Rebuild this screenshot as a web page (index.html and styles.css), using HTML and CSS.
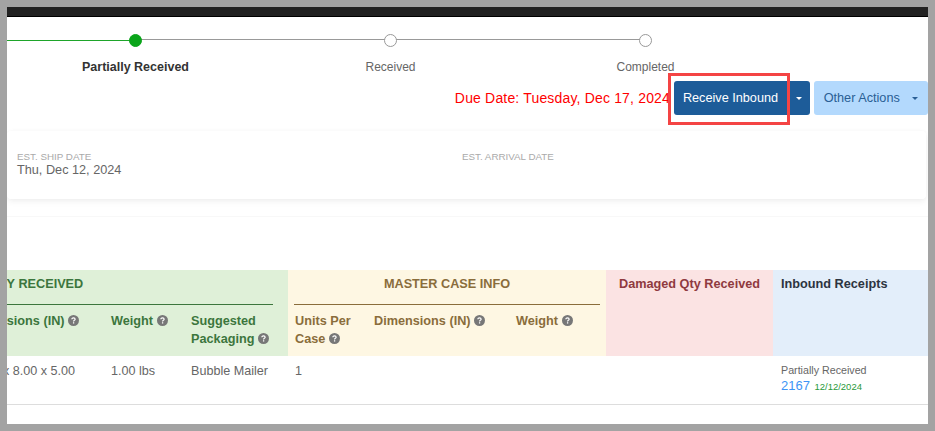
FILE: index.html
```html
<!DOCTYPE html>
<html>
<head>
  <title>Inbound</title>
  <link rel="stylesheet" href="styles.css">
</head>
<body>
  <svg class="icon-defs" width="0" height="0">
    <symbol id="help" viewBox="0 0 12 12">
      <circle cx="6" cy="6" r="6" fill="#777"></circle>
      <path d="M4.2 4.7c0-1 .8-1.6 1.8-1.6s1.8.6 1.8 1.5c0 1.2-1.7 1.2-1.7 2.4" fill="none" stroke="#fff" stroke-width="1.3"></path>
      <rect x="5.4" y="7.9" width="1.4" height="1.4" fill="#fff"></rect>
    </symbol>
  </svg>

  <div class="page">
    <div class="top-bar"></div>

    <div class="stepper">
      <div class="step step-current">
        <div class="dot"></div>
        <div class="step-label">Partially Received</div>
      </div>
      <div class="step">
        <div class="dot"></div>
        <div class="step-label">Received</div>
      </div>
      <div class="step step-last">
        <div class="dot"></div>
        <div class="step-label">Completed</div>
      </div>
    </div>

    <div class="actions">
      <span class="due-date">Due Date: Tuesday, Dec 17, 2024</span>
      <button class="btn btn-primary btn-main">Receive Inbound</button>
      <button class="btn btn-primary btn-split"><span class="caret"></span></button>
      <button class="btn btn-light">Other Actions <span class="caret"></span></button>
    </div>
    <div class="highlight"></div>

    <div class="card">
      <div>
        <div class="card-label">EST. SHIP DATE</div>
        <div class="card-value">Thu, Dec 12, 2024</div>
      </div>
      <div>
        <div class="card-label">EST. ARRIVAL DATE</div>
      </div>
    </div>

    <div class="divider"></div>

    <table class="items">
      <colgroup>
        <col class="c-dims"><col class="c-weight"><col class="c-pack">
        <col class="c-units"><col class="c-mdims"><col class="c-mweight">
        <col class="c-damaged"><col class="c-receipts">
      </colgroup>
      <thead>
        <tr class="group-row">
          <th colspan="3" class="green group group-left"><div class="group-title">QTY RECEIVED</div></th>
          <th colspan="3" class="cream group"><div class="group-title">MASTER CASE INFO</div></th>
          <th rowspan="2" class="pink">Damaged Qty Received</th>
          <th rowspan="2" class="blue">Inbound Receipts</th>
        </tr>
        <tr class="label-row">
          <th class="green">Dimensions (IN) <svg class="help"><use href="#help"></use></svg></th>
          <th class="green">Weight <svg class="help"><use href="#help"></use></svg></th>
          <th class="green">Suggested Packaging <svg class="help"><use href="#help"></use></svg></th>
          <th class="cream">Units Per Case <svg class="help"><use href="#help"></use></svg></th>
          <th class="cream">Dimensions (IN) <svg class="help"><use href="#help"></use></svg></th>
          <th class="cream">Weight <svg class="help"><use href="#help"></use></svg></th>
        </tr>
      </thead>
      <tbody>
        <tr>
          <td>12.00 x 8.00 x 5.00</td>
          <td>1.00 lbs</td>
          <td>Bubble Mailer</td>
          <td>1</td>
          <td></td>
          <td></td>
          <td></td>
          <td class="receipt">
            <div class="receipt-status">Partially Received</div>
            <a class="receipt-id">2167</a> <span class="receipt-date">12/12/2024</span>
          </td>
        </tr>
      </tbody>
    </table>
  </div>
</body>
</html>
```

FILE: styles.css
```css
* {
  box-sizing: border-box;
}

html, body {
  margin: 0;
  height: 431px;
  overflow: hidden;
}

body {
  padding: 7px;
  background-color: #a3a3a3;
  font-family: "Liberation Sans", Arial, sans-serif;
  color: #666;
}

.icon-defs {
  position: absolute;
}

.page {
  position: relative;
  height: 417px;
  overflow: hidden;
  background-color: #fff;
}

.top-bar {
  height: 10px;
  background-color: #222;
  border-bottom: 1px solid #000;
}

/* Stepper */
.stepper {
  display: flex;
  padding: 17px 0 0 1px;
}

.step {
  position: relative;
  width: 255px;
  display: flex;
  flex-direction: column;
  align-items: center;
}

.step::before {
  content: "";
  position: absolute;
  left: 50%;
  width: 100%;
  top: 5px;
  height: 1px;
  background-color: #999;
}

.step-last::before {
  display: none;
}

.step-current::after {
  content: "";
  position: absolute;
  left: -1px;
  width: 50%;
  top: 6px;
  height: 1px;
  background-color: #1ea52a;
}

.dot {
  position: relative;
  z-index: 1;
  width: 13px;
  height: 13px;
  border-radius: 50%;
  background-color: #fff;
  border: 1px solid #999;
}

.step-current .dot {
  background-color: #0aa51a;
  border-color: #0aa51a;
}

.step-label {
  margin-top: 12px;
  font-size: 12px;
  line-height: 16px;
  color: #666;
}

.step-current .step-label {
  font-weight: bold;
  font-size: 12.5px;
  color: #333;
}

/* Action buttons */
.actions {
  display: flex;
  justify-content: flex-end;
  align-items: center;
  margin-top: 6px;
  height: 34px;
}

.due-date {
  margin-right: 4px;
  font-size: 14px;
  letter-spacing: 0.17px;
  color: #f00;
}

.btn {
  height: 34px;
  border: none;
  font-family: inherit;
  font-size: 12.7px;
  padding: 0;
}

.btn-primary {
  background-color: #1d5c99;
  color: #fff;
}

.btn-main {
  width: 113px;
  border-radius: 3px 0 0 3px;
}

.btn-split {
  width: 23px;
  border-radius: 0 3px 3px 0;
}

.btn-light {
  width: 114px;
  margin-left: 4px;
  border-radius: 3px;
  background-color: #b3d9fd;
  color: #2a5f95;
}

.caret {
  display: inline-block;
  vertical-align: middle;
  width: 0;
  height: 0;
  border-top: 3px solid;
  border-left: 3px solid transparent;
  border-right: 3px solid transparent;
}

.btn-light .caret {
  margin-left: 9px;
}

.highlight {
  position: absolute;
  left: 661px;
  top: 66px;
  width: 122px;
  height: 52px;
  border: 3px solid #f44444;
}

/* Dates card */
.card {
  display: grid;
  grid-template-columns: 445px 1fr;
  margin: 16px 2px 0 0;
  height: 68px;
  padding: 21px 0 0 10px;
  border-radius: 4px;
  box-shadow: 0 0 4px rgba(0, 0, 0, 0.03), 0 3px 6px rgba(0, 0, 0, 0.05);
}

.card-label {
  font-size: 9.8px;
  line-height: 10px;
  color: #aaa;
}

.card-value {
  font-size: 12.7px;
  line-height: 16px;
  color: #666;
}

.divider {
  margin-top: 17px;
  height: 1px;
  background-color: #f8f8f8;
}

/* Items table */
.items {
  table-layout: fixed;
  border-collapse: collapse;
  width: 967px;
  margin: 53px 0 0 -46px;
  font-size: 12.6px;
}

.c-dims { width: 143px; }
.c-weight { width: 80px; }
.c-pack { width: 104px; }
.c-units { width: 79px; }
.c-mdims { width: 142px; }
.c-mweight { width: 97px; }
.c-damaged { width: 167px; }
.c-receipts { width: 155px; }

th {
  padding: 0;
  font-size: 12.7px;
  line-height: 18px;
  text-align: left;
  vertical-align: top;
}

.green { background-color: #dff0d8; color: #3c763d; }
.cream { background-color: #fef7e3; color: #8a6d3b; }
.pink { background-color: #fbe3e3; color: #8f3a3f; text-align: center; padding-top: 5px; }
.blue { background-color: #e3eefa; color: #2c3440; padding: 5px 0 0 8px; }

.group-row th.group {
  height: 35px;
  padding: 5px 6px 0;
}

.group-row th.group-left {
  padding: 5px 15px 0 28px;
}

.group-title {
  height: 30px;
  text-align: center;
  border-bottom: 1px solid currentColor;
}

.group-left .group-title {
  text-align: left;
}

.label-row th {
  height: 51px;
  padding: 7px 7px 0;
}

.help {
  width: 11px;
  height: 11px;
  vertical-align: -1px;
}

td {
  height: 48px;
  padding: 7px 7px 0;
  vertical-align: top;
  font-size: 12.6px;
  line-height: 16px;
  color: #666;
  border-bottom: 1px solid #ddd;
}

td.receipt {
  padding: 6px 7px 0 8px;
}

.receipt-status {
  font-size: 10.7px;
  line-height: 16px;
}

.receipt-id {
  font-size: 13px;
  color: #3d94f6;
}

.receipt-date {
  margin-left: 1px;
  font-size: 9.5px;
  color: #2a9a3a;
}
```
